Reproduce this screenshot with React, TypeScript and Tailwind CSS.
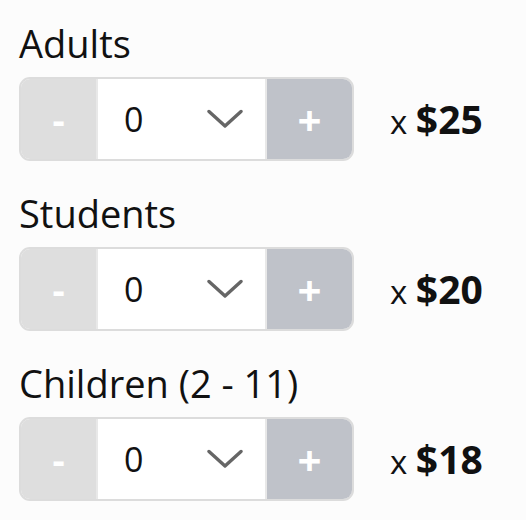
import { useState } from "react";

interface Ticket {
  label: string;
  price: number;
}

const tickets: Ticket[] = [
  { label: "Adults", price: 25 },
  { label: "Students", price: 20 },
  { label: "Children (2 - 11)", price: 18 },
];

function Chevron() {
  return (
    <svg width="36" height="20" viewBox="0 0 36 20" fill="none" className="text-[#666]">
      <path d="M2 2.5 L18 17 L34 2.5" stroke="currentColor" strokeWidth="3.4" strokeLinecap="round" strokeLinejoin="round" />
    </svg>
  );
}

function TicketRow({ ticket }: { ticket: Ticket }) {
  const [count, setCount] = useState(0);

  return (
    <div className="mb-[25px]">
      <div className="h-[54px] text-[38px] font-medium leading-[54px] text-[#111]">{ticket.label}</div>
      <div className="mt-[7px] flex items-center">
        <div className="flex h-[84px] w-[335px] overflow-hidden rounded-[11px] border-2 border-[#dcdcdc]">
          <button
            onClick={() => setCount((c) => Math.max(0, c - 1))}
            className="flex w-[75px] items-center justify-center bg-[#dedede] text-[38px] font-bold text-white"
          >
            -
          </button>
          <div className="flex flex-1 items-center border-x-2 border-[#e8e8e8] bg-white pl-[26px] pr-[22px]">
            <span className="flex-1 text-[34px] text-[#111]">{count}</span>
            <Chevron />
          </div>
          <button
            onClick={() => setCount((c) => c + 1)}
            className="flex w-[85px] items-center justify-center bg-[#bfc2c9] text-[42px] font-bold text-white"
          >
            +
          </button>
        </div>
        <div className="ml-[36px] text-[#111]">
          <span className="text-[33px]">x </span>
          <span className="text-[39px] font-bold">${ticket.price}</span>
        </div>
      </div>
    </div>
  );
}

export default function App() {
  return (
    <div
      className="min-h-screen bg-[#fcfcfc] pl-[19px] pt-[16px]"
      style={{ fontFamily: '"Open Sans", sans-serif' }}
    >
      {tickets.map((t) => (
        <TicketRow key={t.label} ticket={t} />
      ))}
    </div>
  );
}
